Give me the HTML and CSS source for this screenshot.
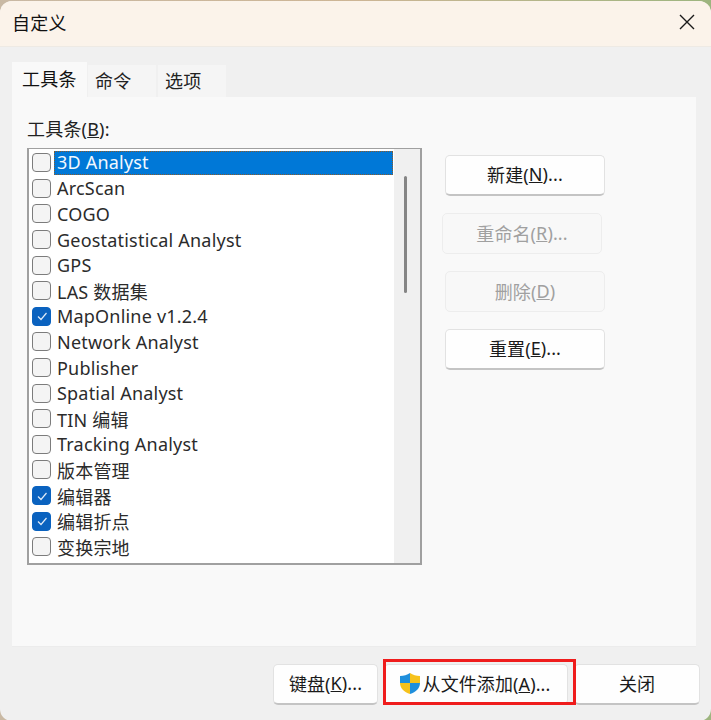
FILE: index.html
```html
<!DOCTYPE html>
<html lang="zh">
<head>
<meta charset="utf-8">
<title>自定义</title>
<link rel="stylesheet" href="styles.css">
</head>
<body>
<div class="window">
  <header class="titlebar">
    <span class="title">自定义</span>
    <svg class="close" width="16" height="16" viewBox="0 0 16 16"><path d="M1 1l14 14M15 1L1 15" stroke="#1a1a1a" stroke-width="1.4" fill="none"/></svg>
  </header>
  <main class="content">
    <nav class="tabs">
      <span class="tab active">工具条</span>
      <span class="tab">命令</span>
      <span class="tab">选项</span>
    </nav>
    <section class="panel">
      <div class="panel-label">工具条(<u>B</u>):</div>
      <div class="panel-main">
        <div class="list">
          <ul class="rows">
            <li class="row"><i class="box"></i><span class="sel">3D Analyst</span></li>
            <li class="row"><i class="box"></i><span class="txt">ArcScan</span></li>
            <li class="row"><i class="box"></i><span class="txt">COGO</span></li>
            <li class="row"><i class="box"></i><span class="txt">Geostatistical Analyst</span></li>
            <li class="row"><i class="box"></i><span class="txt">GPS</span></li>
            <li class="row"><i class="box"></i><span class="txt">LAS 数据集</span></li>
            <li class="row"><i class="box on"><svg width="20" height="20" viewBox="0 0 20 20"><path d="M6 10.5l3 3 5.5-6.5" stroke="#dfeaf7" stroke-width="1.2" fill="none"/></svg></i><span class="txt">MapOnline v1.2.4</span></li>
            <li class="row"><i class="box"></i><span class="txt">Network Analyst</span></li>
            <li class="row"><i class="box"></i><span class="txt">Publisher</span></li>
            <li class="row"><i class="box"></i><span class="txt">Spatial Analyst</span></li>
            <li class="row"><i class="box"></i><span class="txt">TIN 编辑</span></li>
            <li class="row"><i class="box"></i><span class="txt">Tracking Analyst</span></li>
            <li class="row"><i class="box"></i><span class="txt">版本管理</span></li>
            <li class="row"><i class="box on"><svg width="20" height="20" viewBox="0 0 20 20"><path d="M6 10.5l3 3 5.5-6.5" stroke="#dfeaf7" stroke-width="1.2" fill="none"/></svg></i><span class="txt">编辑器</span></li>
            <li class="row"><i class="box on"><svg width="20" height="20" viewBox="0 0 20 20"><path d="M6 10.5l3 3 5.5-6.5" stroke="#dfeaf7" stroke-width="1.2" fill="none"/></svg></i><span class="txt">编辑折点</span></li>
            <li class="row"><i class="box"></i><span class="txt">变换宗地</span></li>
          </ul>
          <div class="scrollbar"><div class="thumb"></div></div>
        </div>
        <div class="side">
          <button class="btn">新建(<u>N</u>)...</button>
          <button class="btn off shifted">重命名(<u>R</u>)...</button>
          <button class="btn off">删除(<u>D</u>)</button>
          <button class="btn">重置(<u>E</u>)...</button>
        </div>
      </div>
    </section>
    <footer class="footer">
      <button class="btn kb">键盘(<u>K</u>)...</button>
      <button class="btn add">
        <svg width="22" height="23" viewBox="0 0 22 23"><path d="M11 1c3 2 6 3 10 3v7H11z" fill="#f6c21c"/><path d="M11 1C8 3 5 4 1 4v7h10z" fill="#1f8fdc"/><path d="M1 11c0 5 4 9 10 11V11z" fill="#f6c21c"/><path d="M21 11c0 5-4 9-10 11V11z" fill="#1f8fdc"/></svg>
        <span>从文件添加(<u>A</u>)...</span>
      </button>
      <button class="btn closebtn">关闭</button>
      <div class="highlight"></div>
    </footer>
  </main>
</div>
</body>
</html>
```
FILE: styles.css
```css
* { box-sizing: border-box; }
html, body { margin: 0; padding: 0; }
body {
  width: 711px;
  height: 720px;
  overflow: hidden;
  background: linear-gradient(90deg, #c9b9a4 0%, #cdb595 50%, #9db57f 100%);
  font-family: "Noto Sans", "Noto Sans CJK SC", sans-serif;
  color: #1c1c1c;
  letter-spacing: 0.2px;
}
.window {
  width: 711px;
  height: 720px;
  background: #f0f0f0;
  border-radius: 12px;
  overflow: hidden;
  display: flex;
  flex-direction: column;
  margin-top: 1px;
}
.titlebar {
  height: 46px;
  flex: none;
  background: #fbf3ea;
  border-bottom: 1px solid #eeeae4;
  display: flex;
  align-items: center;
  justify-content: space-between;
  padding: 0 16px 3px 12px;
}
.title { font-size: 18px; color: #111; }
.content { flex: 1; padding: 15px 15px 0 12px; display: flex; flex-direction: column; }
.tabs { display: flex; height: 35px; align-items: flex-end; font-size: 18px; }
.tab {
  width: 68px;
  height: 32px;
  background: #f5f5f5;
  margin-right: 2px;
  display: flex;
  align-items: center;
  padding: 0 0 2px 7px;
  color: #222;
}
.tab.active { width: 75px; height: 35px; background: #f9f9f9; margin-right: 1px; padding-left: 10px; padding-bottom: 4px; color: #111; }
.panel {
  height: 550px;
  background: #f9f9f9;
  border-bottom: 1px solid #ececec;
  padding: 20px 15px 0;
  display: flex;
  flex-direction: column;
}
.panel-label { font-size: 18px; height: 31px; line-height: 24px; color: #222; }
.panel-main { display: flex; }
.list {
  width: 395px;
  height: 417px;
  background: #fff;
  border: 2px solid #a0a0a0;
  border-width: 1.5px 2px 2px 2px;
  display: flex;
  justify-content: space-between;
  flex: none;
}
.rows { list-style: none; margin: 0; padding: 1px 0 0 3px; width: 365px; }
.row { height: 25.6px; display: flex; align-items: center; font-size: 18px; white-space: nowrap; color: #2b2b2b; }
.box {
  width: 19px;
  height: 19px;
  flex: none;
  border: 1.5px solid #7c7c7c;
  border-radius: 4px;
  background: #f4f4f4;
  margin-right: 6px;
  display: flex;
  align-items: center;
  justify-content: center;
}
.box svg { flex: none; }
.box.on { background: #0a62bf; border-color: #0a62bf; }
.sel {
  background: #0078d7;
  color: #f2f8fe;
  outline: 1px dotted #8a5a2a;
  outline-offset: -1px;
  width: 339px;
  height: 24px;
  line-height: 23px;
  padding-left: 3px;
  margin-left: -3px;
}
.scrollbar { width: 26px; background: #f0f0f0; padding: 27px 0 0 10px; flex: none; }
.thumb { width: 3px; height: 117px; background: #858585; border-radius: 2px; }
.side { margin-left: 23px; display: flex; flex-direction: column; padding-top: 7px; gap: 17px; }
.btn {
  font: inherit;
  font-size: 18px;
  letter-spacing: 0.1px;
  width: 160px;
  height: 41px;
  flex: none;
  background: #fefefe;
  border: 1px solid #e2e2e2;
  border-bottom: 2px solid #c4c4c4;
  border-radius: 5px;
  color: #1a1a1a;
  padding: 0 0 2px;
  display: flex;
  align-items: center;
  justify-content: center;
}
.btn.off { background: #f8f8f8; border: 1px solid #ededed; color: #a0a0a0; }
.btn.shifted { transform: translateX(-3px); }
.footer { position: relative; display: flex; padding: 17px 0 0 261px; margin-right: -15px; gap: 6px; }
.kb { width: 105px; }
.add { width: 184px; gap: 2px; padding-right: 3px; }
.closebtn { width: 126px; }
.highlight {
  position: absolute;
  left: 371px;
  top: 12px;
  width: 193px;
  height: 46px;
  border: 3px solid #ef1c1c;
}
```
